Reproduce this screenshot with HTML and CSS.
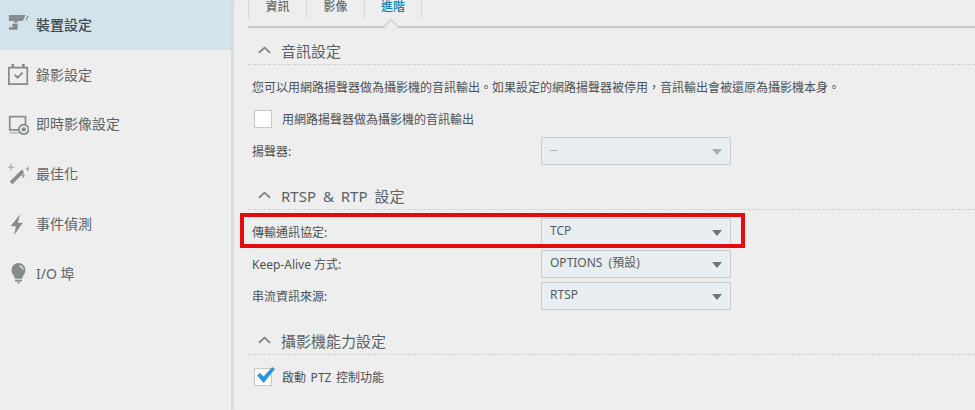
FILE: index.html
```html
<!DOCTYPE html>
<html lang="zh-Hant">
<head>
  <meta charset="UTF-8" />
  <title>裝置設定</title>
  <link rel="stylesheet" href="styles.css">
</head>
<body>
  <div class="app">
    <nav class="sidebar">
      <a class="nav-item active">
        <svg class="nav-icon" viewBox="0 0 24 24"><path d="M1 1h19l-3 7H11v2H7V8H1zM22 2h2l-3 5h-1zM5 11h6v7H1v-3h4z"/></svg>
        <span>裝置設定</span>
      </a>
      <a class="nav-item">
        <svg class="nav-icon" viewBox="0 0 24 24"><path fill-rule="evenodd" d="M0 3h4V0h3v3h9V0h3v3h4v21H0zm2 2v17h19V5z"/><path d="M7 13l1.500-1.500 2.500 2.500 5-5L17.500 10.500 11 17z"/></svg>
        <span>錄影設定</span>
      </a>
      <a class="nav-item">
        <svg class="nav-icon" viewBox="0 0 24 24"><path fill-rule="evenodd" d="M1 2h20v10h-2V4H3v13h9v2H1zM2 21h11v1H2z"/><path fill-rule="evenodd" d="M18 11a6.500 6.500 0 1 0 .01 0zm0 2a4.500 4.500 0 1 1-.01 0z"/><circle cx="18" cy="17.500" r="2.500"/></svg>
        <span>即時影像設定</span>
      </a>
      <a class="nav-item">
        <svg class="nav-icon" viewBox="0 0 24 24"><path d="M2 20l13-13q3-1 3 3L5 23z"/><path d="M3 0h1v3h3v1H4v3H3V4H0V3h3zM22 3h1v2h1v1h-1v2h-1V6h-2V5h2zM17 11h1v2h2v1h-2v2h-1v-2h-2v-1h2z"/></svg>
        <span>最佳化</span>
      </a>
      <a class="nav-item">
        <svg class="nav-icon" viewBox="0 0 24 24"><path d="M14 0L3 14h6l-2 10 10-14h-6z"/></svg>
        <span>事件偵測</span>
      </a>
      <a class="nav-item">
        <svg class="nav-icon" viewBox="0 0 24 24"><path fill-rule="evenodd" d="M12 0a8 8 0 0 1 8 8c0 4-3 6-4 10H8C7 14 4 12 4 8a8 8 0 0 1 8-8z"/><path d="M8 19h8v2H8zM10 22h4l-2 2z"/><path fill="#eeeeee" d="M13 2.500a6 6 0 0 1 5 5h-1.500a5 5 0 0 0-3.500-3.500z"/></svg>
        <span>I/O 埠</span>
      </a>
    </nav>

    <main class="content">
      <div class="tabs">
        <span class="tab">資訊</span>
        <span class="tab">影像</span>
        <span class="tab selected">進階</span>
      </div>

      <section class="group">
        <h3 class="group-title">
          <svg class="chevron" viewBox="0 0 14 8"><path d="M1 7l6-5.500L13 7"/></svg>
          音訊設定
        </h3>
        <p class="note">您可以用網路揚聲器做為攝影機的音訊輸出。如果設定的網路揚聲器被停用，音訊輸出會被還原為攝影機本身。</p>
        <div class="check-row">
          <span class="checkbox"></span>
          用網路揚聲器做為攝影機的音訊輸出
        </div>
        <div class="row">
          <span class="label">揚聲器:</span>
          <span class="select disabled">--</span>
        </div>
      </section>

      <section class="group">
        <h3 class="group-title">
          <svg class="chevron" viewBox="0 0 14 8"><path d="M1 7l6-5.500L13 7"/></svg>
          RTSP &amp; RTP 設定
        </h3>
        <div class="row">
          <span class="label">傳輸通訊協定:</span>
          <span class="select">TCP</span>
          <span class="marker"></span>
        </div>
        <div class="row">
          <span class="label">Keep-Alive 方式:</span>
          <span class="select">OPTIONS (預設)</span>
        </div>
        <div class="row">
          <span class="label">串流資訊來源:</span>
          <span class="select">RTSP</span>
        </div>
      </section>

      <section class="group">
        <h3 class="group-title">
          <svg class="chevron" viewBox="0 0 14 8"><path d="M1 7l6-5.500L13 7"/></svg>
          攝影機能力設定
        </h3>
        <div class="check-row ptz">
          <span class="checkbox">
            <svg class="tick" viewBox="0 0 20 18"><path d="M1 9l3-3 4 4L17 0l3 2L8 17z"/></svg>
          </span>
          <span>啟動 PTZ 控制功能</span>
        </div>
      </section>
    </main>
  </div>
</body>
</html>
```

FILE: styles.css
```css
* {
  box-sizing: border-box;
  margin: 0;
  padding: 0;
}

body {
  font-family: "Noto Sans", "Noto Sans CJK TC", sans-serif;
  background: #eeeeee;
  color: #4a5257;
  font-size: 12px;
  height: 410px;
  overflow: hidden;
}

.app {
  display: flex;
  height: 410px;
}

.sidebar {
  width: 232px;
  flex: none;
  border-right: 1px solid #dcdcdc;
  box-shadow: 1px 0 3px rgba(0, 0, 0, 0.15);
}

.nav-item {
  display: flex;
  align-items: center;
  gap: 7px;
  height: 49.8px;
  padding-left: 8px;
  font-size: 14px;
  color: #5c6468;
}

.nav-item span {
  margin-top: -2px;
}

.nav-item.active {
  background: #d3e3ec;
  color: #3e4a52;
  font-weight: 500;
}

.nav-icon {
  width: 21px;
  height: 21px;
  fill: #868b8e;
  flex: none;
}

.content {
  flex: 1;
  padding-left: 16px;
  min-width: 0;
}

.tabs {
  display: flex;
  height: 28px;
  border-bottom: 2px solid #c8cacb;
  position: relative;
}

.tab {
  width: 58px;
  height: 19px;
  border-left: 1px solid #d6d8d9;
  text-align: center;
  font-weight: 500;
  font-size: 12px;
  line-height: 14px;
  color: #666c70;
}

.tab.selected {
  color: #0f7fb5;
  border-right: 1px solid #d6d8d9;
  position: relative;
}

.tab.selected::after {
  content: "";
  position: absolute;
  left: 21px;
  top: 21px;
  width: 9px;
  height: 9px;
  background: #eeeeee;
  border-left: 1px solid #c8cacb;
  border-top: 1px solid #c8cacb;
  transform: rotate(45deg);
}

.group {
  padding-top: 14px;
}

.tabs + .group {
  padding-top: 10px;
}

.group-title {
  display: flex;
  align-items: center;
  gap: 10px;
  height: 27px;
  padding-left: 10px;
  padding-bottom: 2px;
  font-size: 15px;
  font-weight: 400;
  color: #5a6266;
  border-bottom: 1px dashed #cfd1d2;
  word-spacing: 3px;
}

.chevron {
  width: 13px;
  height: 8px;
  fill: none;
  stroke: #7f8588;
  stroke-width: 2;
  flex: none;
}

.note {
  margin-top: 14px;
  padding-left: 4px;
  line-height: 17px;
  white-space: nowrap;
}

.check-row {
  display: flex;
  align-items: center;
  gap: 10px;
  height: 18px;
  margin-top: 14px;
  padding-left: 6px;
}

.checkbox {
  width: 18px;
  height: 18px;
  background: #ffffff;
  border: 1px solid #c4c6c7;
  position: relative;
  flex: none;
}

.tick {
  position: absolute;
  left: 1px;
  top: -2px;
  width: 19px;
  height: 17px;
  fill: #2b95e0;
}

.row {
  display: flex;
  align-items: center;
  height: 28px;
  margin-bottom: 4px;
  padding-left: 4px;
  position: relative;
}

.check-row + .row {
  margin-top: 9px;
}

.group-title + .row {
  margin-top: 8px;
}

.label {
  width: 289px;
  flex: none;
}

.select {
  width: 190px;
  height: 28px;
  padding-left: 8px;
  line-height: 24px;
  background: #e9eef2;
  border: 1px solid #c9cdd0;
  color: #555c61;
  word-spacing: 3px;
  position: relative;
}

.select::after {
  content: "";
  position: absolute;
  right: 8px;
  top: 11px;
  border-left: 5.500px solid transparent;
  border-right: 5.500px solid transparent;
  border-top: 6px solid #6f767b;
}

.select.disabled {
  color: #a5a9ac;
}

.select.disabled::after {
  border-top-color: #a9adb0;
}

/* red annotation drawn over the TCP row */
.marker {
  position: absolute;
  left: -8px;
  top: -5px;
  width: 505px;
  height: 35px;
  border: 4px solid #e30b0b;
  pointer-events: none;
}

.check-row.ptz {
  margin-top: 13px;
  word-spacing: 1.500px;
}
```
